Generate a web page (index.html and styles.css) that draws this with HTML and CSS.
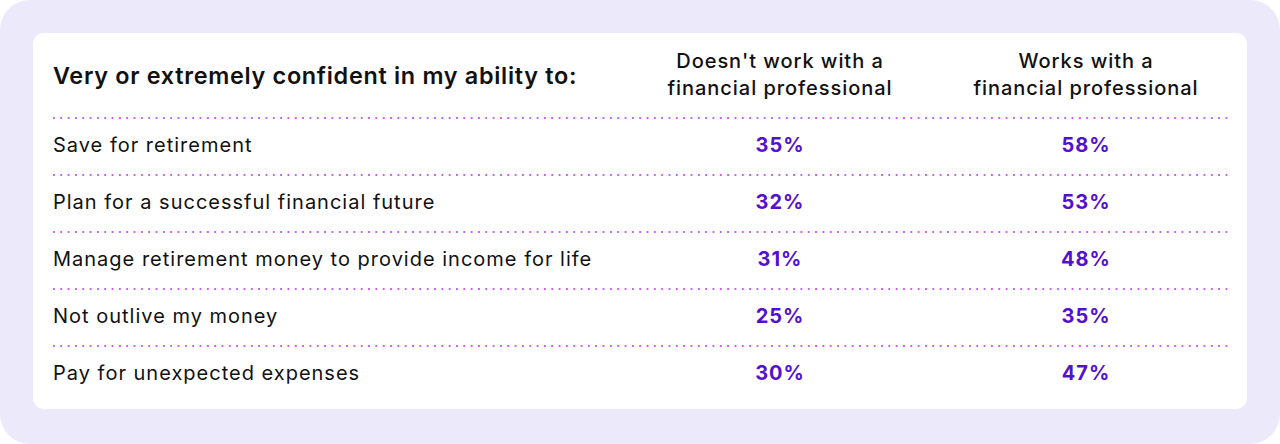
FILE: index.html
```html
<!DOCTYPE html>
<html lang="en">
<head>
<meta charset="utf-8">
<title>Confidence table</title>
<link rel="stylesheet" href="styles.css">
</head>
<body>
<div class="frame">
  <div class="card">
    <div class="row head">
      <div class="title">Very or extremely confident in my ability to:</div>
      <div class="colhead">Doesn't work with a<br>financial professional</div>
      <div class="colhead">Works with a<br>financial professional</div>
    </div>
    <div class="row">
      <div class="label">Save for retirement</div>
      <div class="val">35%</div>
      <div class="val">58%</div>
    </div>
    <div class="row">
      <div class="label">Plan for a successful financial future</div>
      <div class="val">32%</div>
      <div class="val">53%</div>
    </div>
    <div class="row">
      <div class="label">Manage retirement money to provide income for life</div>
      <div class="val">31%</div>
      <div class="val">48%</div>
    </div>
    <div class="row">
      <div class="label">Not outlive my money</div>
      <div class="val">25%</div>
      <div class="val">35%</div>
    </div>
    <div class="row">
      <div class="label">Pay for unexpected expenses</div>
      <div class="val">30%</div>
      <div class="val">47%</div>
    </div>
  </div>
</div>
</body>
</html>
```
FILE: styles.css
```css
* { box-sizing: border-box; }
html, body { margin: 0; padding: 0; background: #ffffff; }
body {
  font-family: "Inter", "Open Sans", sans-serif;
  color: #111111;
  width: 1280px;
  height: 444px;
}
.frame {
  width: 1280px;
  height: 444px;
  background: #ebe9fa;
  border-radius: 30px;
  padding: 33px;
}
.card {
  background: #ffffff;
  border-radius: 11px;
  height: 376px;
  padding: 0 19px 0 20px;
}
.row {
  display: grid;
  grid-template-columns: 1fr 284px 284px;
  column-gap: 22px;
  align-items: center;
  height: 57px;
  background-image: linear-gradient(to right, #c760f0 0, #c760f0 2px, transparent 2px);
  background-size: 7.33px 2px;
  background-repeat: repeat-x;
  background-position: 0 0;
  padding-bottom: 2px;
}
.row.head {
  height: 84px;
  background: none;
  padding-bottom: 0;
}
.title {
  font-size: 23.4px;
  font-weight: 600;
  letter-spacing: 0.7px;
}
.colhead {
  text-align: center;
  font-size: 20px;
  font-weight: 500;
  line-height: 27px;
  letter-spacing: 0.95px;
}
.label {
  font-size: 20px;
  font-weight: 400;
  letter-spacing: 1px;
}
.val {
  text-align: center;
  font-size: 20px;
  font-weight: 700;
  letter-spacing: 1px;
  color: #5410d0;
}
```
